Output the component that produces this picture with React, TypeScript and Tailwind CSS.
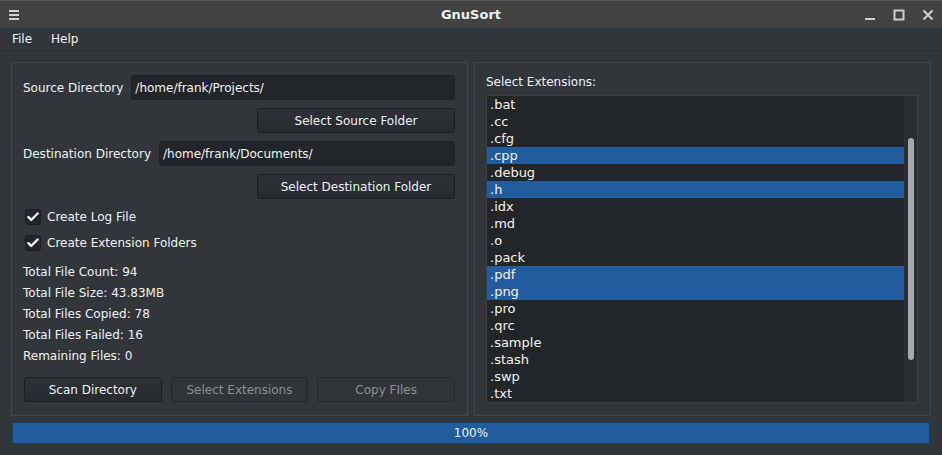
import { Check } from "lucide-react"

const extensions = [
  ".bat", ".cc", ".cfg", ".cpp", ".debug", ".h", ".idx", ".md", ".o",
  ".pack", ".pdf", ".png", ".pro", ".qrc", ".sample", ".stash", ".swp", ".txt",
]
const selected = new Set([".cpp", ".h", ".pdf", ".png"])

const stats = [
  "Total File Count: 94",
  "Total File Size: 43.83MB",
  "Total Files Copied: 78",
  "Total Files Failed: 16",
  "Remaining Files: 0",
]

function TitleBar() {
  return (
    <div className="relative flex h-[28px] items-center justify-between border-t border-[#555] bg-[#424242] px-[8px]">
      <svg width="12" height="12" viewBox="0 0 12 12" className="text-[#cfcfcf]">
        <rect x="1" y="1" width="10" height="2" fill="currentColor" />
        <rect x="1" y="5" width="10" height="2" fill="currentColor" />
        <rect x="1" y="9" width="10" height="2" fill="currentColor" />
      </svg>
      {/* title centred over the whole bar */}
      <div className="pointer-events-none absolute inset-0 flex items-center justify-center text-[13px] font-bold text-[#eeeeee]">
        GnuSort
      </div>
      <div className="flex items-center gap-[17px] text-[#cfcfcf]">
        <svg width="12" height="12" viewBox="0 0 12 12">
          <rect x="1" y="9" width="10" height="2" fill="currentColor" />
        </svg>
        <svg width="12" height="12" viewBox="0 0 12 12">
          <rect x="1.5" y="1.5" width="9" height="9" fill="none" stroke="currentColor" strokeWidth="2" />
        </svg>
        <svg width="12" height="12" viewBox="0 0 12 12">
          <path d="M1.5 1.5 L10.5 10.5 M10.5 1.5 L1.5 10.5" stroke="currentColor" strokeWidth="2" />
        </svg>
      </div>
    </div>
  )
}

function Button({ label, disabled }: { label: string; disabled?: boolean }) {
  return (
    <div
      className={`flex h-[25px] items-center justify-center rounded-[3px] border ${
        disabled
          ? "border-[#25282b] bg-[#30353a] text-[#8c8e90]"
          : "border-[#1c1f22] bg-gradient-to-b from-[#2e3236] to-[#272a2e] text-[#eff0f1]"
      }`}
    >
      {label}
    </div>
  )
}

function Checkbox({ label }: { label: string }) {
  return (
    <div className="flex h-[26px] items-center gap-[6px] pl-[2px]">
      <div className="flex h-[16px] w-[16px] items-center justify-center rounded-[3px] border border-[#1c1f22] bg-[#232629]">
        <Check size={14} strokeWidth={4} className="text-white" />
      </div>
      <span>{label}</span>
    </div>
  )
}

function PathRow({ label, value }: { label: string; value: string }) {
  return (
    <div className="flex h-[25px] items-center gap-[8px]">
      <span>{label}</span>
      <div className="flex h-full flex-1 items-center rounded-[3px] border border-[#1f2225] bg-[#232629] px-[3px]">
        {value}
      </div>
    </div>
  )
}

export default function App() {
  return (
    <div
      className="flex h-[455px] w-[942px] flex-col overflow-hidden bg-[#31363b] text-[12px] text-[#eff0f1]"
      style={{ fontFamily: '"DejaVu Sans", sans-serif' }}
    >
      <TitleBar />

      {/* menu bar */}
      <div className="flex h-[23px] items-center gap-[19px] border-b border-[#2a2e32] px-[12px]">
        <span>File</span>
        <span>Help</span>
      </div>

      <div className="flex gap-[6px] px-[11px] pt-[11px]">
        {/* left group */}
        <div className="flex h-[354px] w-[458px] flex-col border border-[#40464c] pl-[11px] pr-[12px] pt-[12px]">
          <PathRow label="Source Directory" value="/home/frank/Projects/" />
          <div className="mt-[8px] flex justify-end">
            <div className="w-[198px]"><Button label="Select Source Folder" /></div>
          </div>
          <div className="mt-[8px]">
            <PathRow label="Destination Directory" value="/home/frank/Documents/" />
          </div>
          <div className="mt-[8px] flex justify-end">
            <div className="w-[198px]"><Button label="Select Destination Folder" /></div>
          </div>
          <div className="mt-[5px]">
            <Checkbox label="Create Log File" />
            <Checkbox label="Create Extension Folders" />
          </div>
          <div className="mt-[5px]">
            {stats.map((s) => (
              <div key={s} className="flex h-[21px] items-center">{s}</div>
            ))}
          </div>
          <div className="mt-[11px] grid grid-cols-3 gap-[9px] pl-[1px]">
            <Button label="Scan Directory" />
            <Button label="Select Extensions" disabled />
            <Button label="Copy FIles" disabled />
          </div>
        </div>

        {/* right group */}
        <div className="flex h-[354px] w-[458px] flex-col border border-[#40464c] pl-[11px] pr-[12px] pt-[10px]">
          <div className="flex h-[18px] items-center">Select Extensions:</div>
          <div className="mt-[4px] flex h-[308px] border border-[#3a4045] bg-[#232629]">
            <div className="flex-1">
              {extensions.map((ext) => (
                <div
                  key={ext}
                  className={`flex h-[17px] items-center pl-[3px] text-[13px] ${
                    selected.has(ext) ? "bg-[#215d9c]" : ""
                  }`}
                >
                  {ext}
                </div>
              ))}
            </div>
            <div className="w-[13px] border-l border-[#2e3236] bg-[#2a2e32] px-[3px] pt-[42px]">
              <div className="h-[222px] w-[6px] rounded-[3px] bg-[#a6a8aa]" />
            </div>
          </div>
        </div>
      </div>

      {/* progress bar */}
      <div className="mx-[12px] mt-[6px] flex h-[22px] items-center justify-center border border-[#1b3c62] bg-[#215d9c] text-[#eff0f1]">
        100%
      </div>
    </div>
  )
}
